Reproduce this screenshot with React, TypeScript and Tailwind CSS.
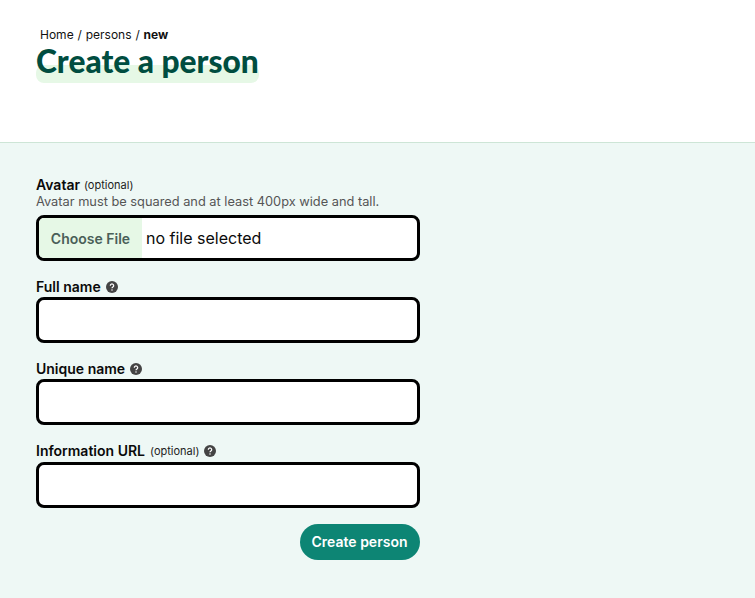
const sans = "font-['Inter',sans-serif]";

function Help() {
  return (
    <svg width="12" height="12" viewBox="0 0 12 12" className="shrink-0 block">
      <circle cx="6" cy="6" r="6" fill="#444" />
      <path d="M4.3 4.7a1.7 1.7 0 1 1 2.6 1.4c-.6.4-.9.6-.9 1.2" fill="none" stroke="#fff" strokeWidth="1.2" />
      <circle cx="6" cy="9.1" r=".75" fill="#fff" />
    </svg>
  );
}

function Field({ label, optional, help, className, labelClass }: { label: string; optional?: boolean; help?: boolean; className?: string; labelClass?: string }) {
  return (
    <div className={`flex flex-col ${className ?? ""}`}>
      <div className={`flex items-center h-[20px] ${labelClass ?? "mb-[1px]"}`}>
        <span className="text-[14px] font-semibold text-[#0a0a0a]">{label}</span>
        {optional && <span className="text-[11px] text-[#222] ml-[5px] translate-y-[1px]">(optional)</span>}
        {help && <span className="ml-[5px] translate-y-[1px]"><Help /></span>}
      </div>
      <input className="block w-full h-[46px] bg-white border-[3px] border-black rounded-[8px]" />
    </div>
  );
}

export default function App() {
  return (
    <div className={`${sans} w-[755px] h-[598px] bg-white flex flex-col overflow-hidden`}>
      <header className="h-[143px] shrink-0 border-b border-[#cde5d6] pl-[36px] pt-[27px]">
        <div className="pl-[4px] text-[12px] leading-[16px] text-[#111] [word-spacing:0.5px]">
          Home / persons / <span className="font-bold">new</span>
        </div>
        <h1 className="relative inline-block font-['Lato',sans-serif] font-black text-[31.7px] leading-[36px] text-[#004d40]">
          <span className="absolute left-0 right-0 bottom-[-4px] h-[18px] rounded-[8px] bg-[#e6f8e6]" />
          <span className="relative">Create a person</span>
        </h1>
      </header>
      <main className="flex-1 bg-[#eef8f5] pl-[36px] pt-[32px]">
        <form className="w-[384px] flex flex-col">
          <div className="flex items-center h-[19px]">
            <span className="text-[14px] font-semibold text-[#0a0a0a]">Avatar</span>
            <span className="text-[11px] text-[#222] ml-[4px] translate-y-[1px]">(optional)</span>
          </div>
          <p className="text-[12.8px] leading-[16px] text-[#555] mb-[5px]">Avatar must be squared and at least 400px wide and tall.</p>
          <div className="h-[46px] bg-white border-[3px] border-black rounded-[8px] flex items-stretch overflow-hidden">
            <span className="w-[103px] bg-[#e6f8e6] flex items-center justify-center text-[14px] font-semibold text-[#4a5f58]">Choose File</span>
            <span className="flex items-center ml-[4px] pb-[1px] text-[16px] text-[#0a0a0a]">no file selected</span>
          </div>
          <div className="mt-[15px] flex flex-col">
            <Field label="Full name" help />
            <Field label="Unique name" help className="mt-[15px]" />
            <Field label="Information URL" optional help className="mt-[15px]" labelClass="mb-[2px]" />
          </div>
          <div className="flex justify-end mt-[16px]">
            <button type="button" className="h-[36px] w-[120px] rounded-full bg-[#0d8574] text-white text-[14px] font-semibold pb-[1px] pr-[1px]">Create person</button>
          </div>
        </form>
      </main>
    </div>
  );
}
